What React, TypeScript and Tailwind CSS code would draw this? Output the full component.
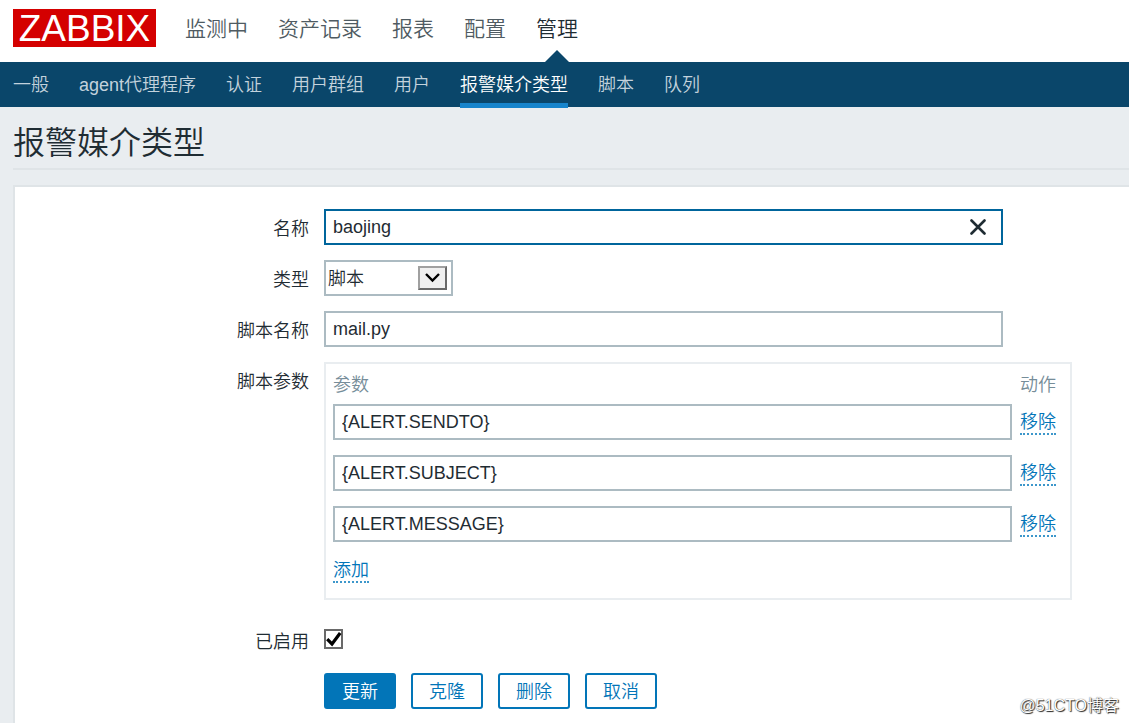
import { useState } from "react";

const mainMenu = ["监测中", "资产记录", "报表", "配置", "管理"];

const subMenu = [
  "一般",
  "agent代理程序",
  "认证",
  "用户群组",
  "用户",
  "报警媒介类型",
  "脚本",
  "队列",
];

const inputClass =
  "block h-9 w-full border-2 border-[#acbbc2] bg-white px-[7px] text-[#1f2c33] outline-none";

const Header = () => (
  <header>
    <div className="flex h-[62px] bg-white pl-[13px]">
      <a
        href="#"
        className="mt-[9px] flex h-[38px] w-[143px] items-center justify-center bg-[#d40000] text-[37px] leading-[38px] text-white"
      >
        <span className="pt-0.5">ZABBIX</span>
      </a>
      <nav className="ml-[29px] flex gap-[30px] text-[21px] text-[#4f5b62]">
        {mainMenu.map((item) => (
          <a
            key={item}
            href="#"
            className={
              item === "管理"
                ? "relative h-full whitespace-nowrap leading-[57px] text-[#1f2c33]"
                : "h-full whitespace-nowrap leading-[57px]"
            }
          >
            {item}
            {item === "管理" && (
              <svg
                className="absolute bottom-0 left-1/2 -translate-x-1/2"
                width="24"
                height="12"
                viewBox="0 0 24 12"
              >
                <path d="M12 0L24 12H0Z" fill="#0a466a" />
              </svg>
            )}
          </a>
        ))}
      </nav>
    </div>
    <nav className="flex h-[45px] gap-[30px] bg-[#0a466a] pl-[13px] text-[#c3d2dc]">
      {subMenu.map((item) => (
        <a
          key={item}
          href="#"
          className={
            item === "报警媒介类型"
              ? "h-[46px] whitespace-nowrap border-b-[5px] border-[#1784cb] leading-[47px] text-white"
              : "h-[45px] whitespace-nowrap leading-[47px]"
          }
        >
          {item}
        </a>
      ))}
    </nav>
  </header>
);

const Label = ({ text, htmlFor }: { text: string; htmlFor: string }) => (
  <label
    htmlFor={htmlFor}
    className="w-[294px] shrink-0 pt-1 text-right leading-8"
  >
    {text}
  </label>
);

const DottedButton = ({ text, onClick }: { text: string; onClick: () => void }) => (
  <button
    type="button"
    onClick={onClick}
    className="block cursor-pointer whitespace-nowrap border-b-2 border-dotted border-[#3d97cb] pt-0.5 leading-[22px] text-[#0275b8]"
  >
    {text}
  </button>
);

const Params = () => {
  const [params, setParams] = useState([
    "{ALERT.SENDTO}",
    "{ALERT.SUBJECT}",
    "{ALERT.MESSAGE}",
  ]);

  return (
    <div className="max-w-[748px] flex-1 border-2 border-[#e9edf0] pb-[15px] pl-[7px] pr-[14px]">
      <table className="w-full">
        <thead>
          <tr className="h-10 text-left text-[#768d99]">
            <th className="p-0 pt-0.5 font-[350]">参数</th>
            <th className="w-11 p-0 pl-2 pt-0.5 font-[350]">动作</th>
          </tr>
        </thead>
        <tbody>
          {params.map((param, index) => (
            <tr key={index}>
              <td className="p-0 pb-[15px]">
                <input
                  type="text"
                  aria-label={`参数 ${index + 1}`}
                  value={param}
                  onChange={(e) =>
                    setParams(params.map((p, i) => (i === index ? e.target.value : p)))
                  }
                  className={inputClass}
                />
              </td>
              <td className="p-0 pb-4 pl-2">
                <DottedButton
                  text="移除"
                  onClick={() => setParams(params.filter((_, i) => i !== index))}
                />
              </td>
            </tr>
          ))}
        </tbody>
      </table>
      <DottedButton text="添加" onClick={() => setParams([...params, ""])} />
    </div>
  );
};

const MediaTypeForm = () => {
  const [name, setName] = useState("baojing");

  return (
    <form className="flex flex-col gap-[15px]" onSubmit={(e) => e.preventDefault()}>
      <div className="flex gap-[15px]">
        <Label text="名称" htmlFor="name" />
        <div className="relative max-w-[679px] flex-1">
          <input
            id="name"
            type="text"
            value={name}
            onChange={(e) => setName(e.target.value)}
            className="block h-9 w-full border-2 border-[#00659c] bg-white pl-[7px] pr-10 text-[#1f2c33] outline-none"
          />
          <button
            type="button"
            aria-label="清除"
            onClick={() => setName("")}
            className="absolute right-4 top-2.5"
          >
            <svg width="18" height="16" viewBox="0 0 18 16">
              <path
                d="M2.5 1.5L15.5 14.5M15.5 1.5L2.5 14.5"
                stroke="#1f2c33"
                strokeWidth="2.6"
                strokeLinecap="round"
              />
            </svg>
          </button>
        </div>
      </div>

      <div className="flex gap-[15px]">
        <Label text="类型" htmlFor="type" />
        <div className="relative">
          <select
            id="type"
            defaultValue="脚本"
            className="block h-9 w-[129px] appearance-none border-2 border-[#acbbc2] bg-white pl-0.5 pt-0.5 text-[#1f2c33] outline-none"
          >
            <option>电子邮件</option>
            <option>脚本</option>
            <option>短信</option>
          </select>
          <span className="pointer-events-none absolute right-1.5 top-1.5 flex h-6 w-[29px] items-center justify-center border-2 border-b-[#696969] border-l-[#a0a0a0] border-r-[#696969] border-t-[#a0a0a0] bg-[#f0f0f0]">
            <svg width="15" height="10" viewBox="0 0 15 10">
              <path d="M1 1L7.5 7.5L14 1" fill="none" stroke="#000" strokeWidth="2.4" />
            </svg>
          </span>
        </div>
      </div>

      <div className="flex gap-[15px]">
        <Label text="脚本名称" htmlFor="script" />
        <div className="max-w-[679px] flex-1">
          <input id="script" type="text" defaultValue="mail.py" className={inputClass} />
        </div>
      </div>

      <div className="flex gap-[15px]">
        <span className="w-[294px] shrink-0 pt-1 text-right leading-8">脚本参数</span>
        <Params />
      </div>

      <div className="mt-[7px] flex gap-[15px]">
        <Label text="已启用" htmlFor="enabled" />
        <div className="relative mt-[7px] h-5 w-[19px]">
          <input
            id="enabled"
            type="checkbox"
            defaultChecked
            className="peer block h-5 w-[19px] appearance-none border-2 border-[#696969] bg-white"
          />
          <svg
            className="pointer-events-none absolute left-0 top-0 hidden peer-checked:block"
            width="19"
            height="20"
            viewBox="0 0 19 20"
          >
            <path d="M3.2 10.2L8 15L16.2 4" fill="none" stroke="#000" strokeWidth="3.2" />
          </svg>
        </div>
      </div>

      <div className="ml-[309px] flex gap-[15px]">
        <button
          type="submit"
          className="h-9 w-[72px] rounded-[3px] border-2 border-[#0275b8] bg-[#0275b8] pt-0.5 text-white"
        >
          更新
        </button>
        {["克隆", "删除", "取消"].map((text) => (
          <button
            key={text}
            type="button"
            className="h-9 w-[72px] rounded-[3px] border-2 border-[#0275b8] bg-white pt-0.5 text-[#0275b8]"
          >
            {text}
          </button>
        ))}
      </div>
    </form>
  );
};

export default function App() {
  return (
    <div className="relative flex min-h-screen flex-col bg-[#e9edf0] font-['Liberation_Sans','Noto_Sans_CJK_SC',sans-serif] text-[18px] font-[350] text-[#1f2c33]">
      <Header />
      <main className="flex flex-1 flex-col pl-[13px]">
        <h1 className="h-[63px] border-b-2 border-[#dfe4e7] text-[32px] font-[350] leading-[72px]">
          报警媒介类型
        </h1>
        <div className="mt-[15px] flex-1 border-l-2 border-t-2 border-[#dfe4e7] bg-white pb-[15px] pt-[22px]">
          <MediaTypeForm />
        </div>
      </main>
      <span className="absolute bottom-1.5 right-2.5 text-[16px] leading-6 text-white [text-shadow:1px_1px_1px_#222,0_0_1px_#333]">
        @51CTO博客
      </span>
    </div>
  );
}
